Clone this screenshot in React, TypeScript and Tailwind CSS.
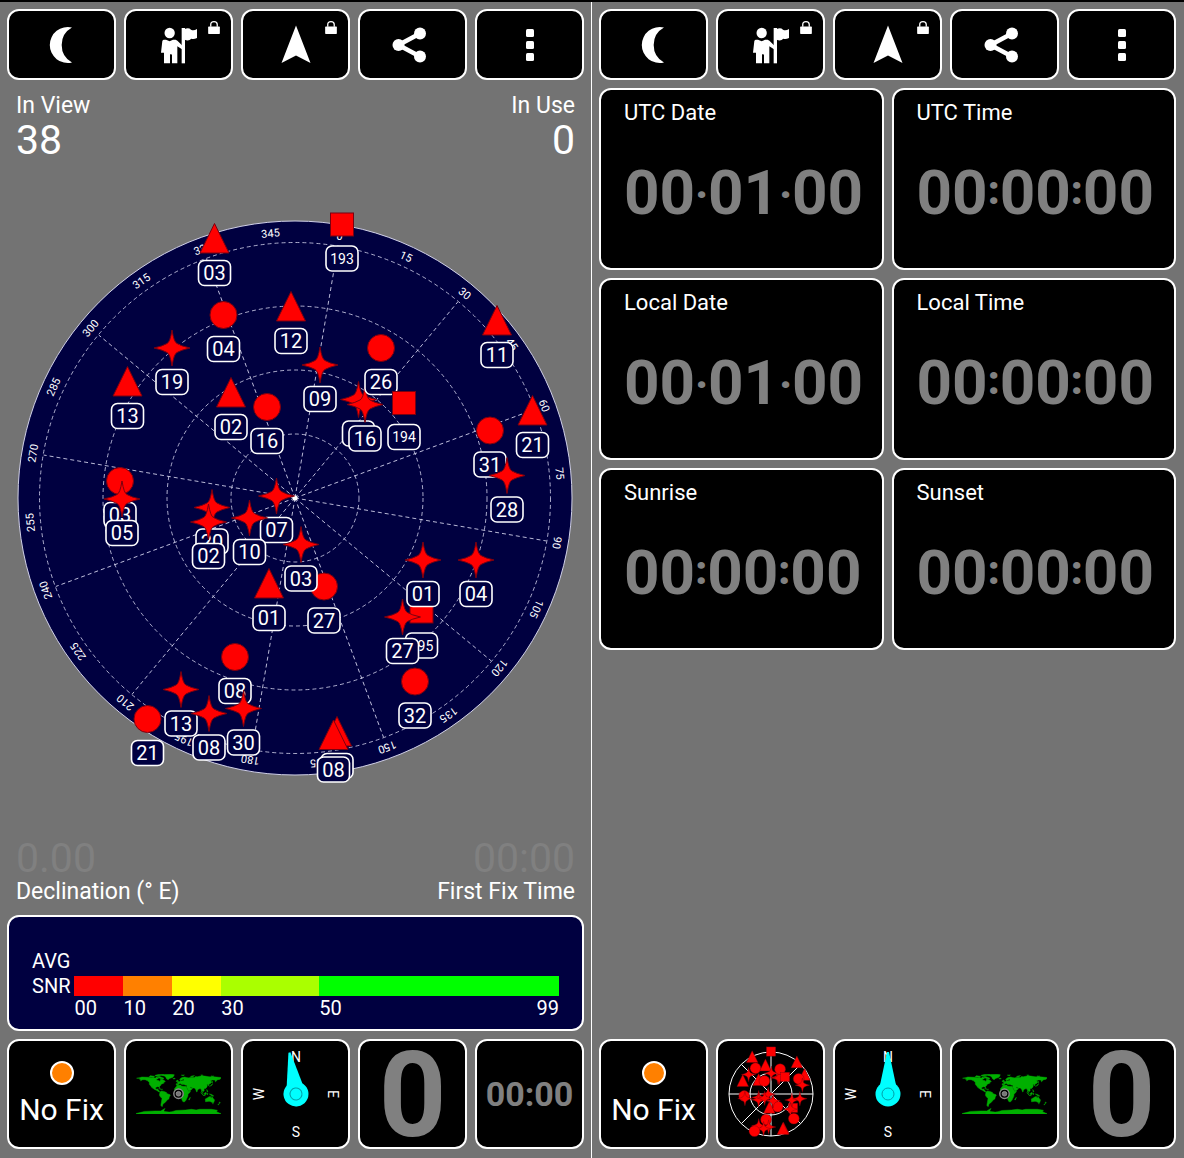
import React from "react";

type Shape = "tri" | "circle" | "star" | "square";
type Sat = { shape: Shape; x: number; y: number; id?: string };

const HEADING = 9.7;

// Satellite places on the sky plot, relative to the zenith.
const sats: Sat[] = [
  { shape: "square", x: 47, y: -273.5, id: "193" },
  { shape: "tri", x: -80.5, y: -259, id: "03" },
  { shape: "circle", x: -71.5, y: -183, id: "04" },
  { shape: "tri", x: -4, y: -191, id: "12" },
  { shape: "star", x: -123, y: -150, id: "19" },
  { shape: "tri", x: -167.5, y: -116, id: "13" },
  { shape: "tri", x: -64, y: -105, id: "02" },
  { shape: "circle", x: -28, y: -91, id: "16" },
  { shape: "star", x: 25, y: -133, id: "09" },
  { shape: "star", x: 63.5, y: -98.5 },
  { shape: "star", x: 70, y: -93.5, id: "16" },
  { shape: "circle", x: 86, y: -150, id: "26" },
  { shape: "square", x: 109, y: -95, id: "194" },
  { shape: "tri", x: 202, y: -177, id: "11" },
  { shape: "tri", x: 237.5, y: -87, id: "21" },
  { shape: "circle", x: 195, y: -67.5, id: "31" },
  { shape: "star", x: 212, y: -22.5, id: "28" },
  { shape: "circle", x: -175, y: -17, id: "03" },
  { shape: "star", x: -173, y: 1, id: "05" },
  { shape: "star", x: -83, y: 9.5, id: "20" },
  { shape: "star", x: -86.5, y: 24, id: "02" },
  { shape: "star", x: -18.5, y: -2, id: "07" },
  { shape: "star", x: -45.5, y: 20, id: "10" },
  { shape: "circle", x: 29, y: 88.5, id: "27" },
  { shape: "star", x: 6, y: 46.5, id: "03" },
  { shape: "tri", x: -26, y: 86, id: "01" },
  { shape: "square", x: 126.5, y: 113.5, id: "195" },
  { shape: "star", x: 128, y: 62, id: "01" },
  { shape: "star", x: 181, y: 62, id: "04" },
  { shape: "star", x: 107.5, y: 119, id: "27" },
  { shape: "circle", x: 120, y: 183.5, id: "32" },
  { shape: "circle", x: -60, y: 159, id: "08" },
  { shape: "star", x: -51.5, y: 210.5, id: "30" },
  { shape: "star", x: -114, y: 191.5, id: "13" },
  { shape: "star", x: -86, y: 215.5, id: "08" },
  { shape: "circle", x: -147.5, y: 221, id: "21" },
  { shape: "tri", x: 42, y: 234 },
  { shape: "tri", x: 38.5, y: 237.5, id: "08" },
];

function Marker({ shape }: { shape: Shape }) {
  const p = { fill: "#ff0000", stroke: "#7a0010", strokeWidth: 1 };
  if (shape === "tri") return <path d="M0-15.5L14.5 14H-14.5Z" {...p} />;
  if (shape === "circle") return <circle r="13.5" {...p} />;
  if (shape === "square") return <rect x="-11.5" y="-11.5" width="23" height="23" {...p} />;
  return <path d="M0-18Q2-5.500 5-4.500Q9-2 18 0Q9 2 5 4.500Q2 5.500 0 18Q-2 5.500-5 4.500Q-9 2-18 0Q-9-2-5-4.500Q-2-5.500 0-18Z" {...p} />;
}

function SkyPlot() {
  const spokes = Array.from({ length: 12 }, (_, i) => i * 30);
  const ticks = Array.from({ length: 24 }, (_, i) => i * 15);
  const dash = { fill: "none", stroke: "#d8d8f0", strokeWidth: 0.8, strokeDasharray: "4 3" };
  return (
    <svg viewBox="-288 -290 577 580" className="block w-full font-[Roboto,sans-serif]" role="img" aria-label="Satellite sky plot">
      <circle r="277" fill="#000040" stroke="#d0d0e8" strokeWidth="1" />
      {[64, 128, 192, 255.5].map((r) => (
        <circle key={r} r={r} {...dash} />
      ))}
      <g transform={`rotate(${HEADING})`}>
        {spokes.map((a) => (
          <path key={a} d="M0 0V-255" transform={`rotate(${a})`} {...dash} />
        ))}
        {ticks.map((a) => (
          <text key={a} y="-262" transform={`rotate(${a})`} textAnchor="middle" fontSize="11" fill="#fff">
            {a}
          </text>
        ))}
      </g>
      <circle r="2.500" fill="#fff" />
      {sats.map((s, i) => (
        <g key={i} transform={`translate(${s.x} ${s.y})`}>
          <rect x="-16" y="21.500" width="32" height="25" rx="6" fill="#000040" stroke="#fff" strokeWidth="1.600" />
          {s.id && (
            <text y={s.id.length > 2 ? 39 : 41} textAnchor="middle" fontSize={s.id.length > 2 ? 14 : 20} fill="#fff">
              {s.id}
            </text>
          )}
          <Marker shape={s.shape} />
        </g>
      ))}
    </svg>
  );
}

function MiniSky() {
  const a = (-HEADING * Math.PI) / 180;
  const line = { fill: "none", stroke: "#fff", strokeWidth: 1 };
  return (
    <svg viewBox="-52 -52 104 104" className="size-[104px]" aria-hidden="true">
      <circle r="42" {...line} />
      <circle r="21" {...line} />
      <path d="M-42 0H42M0-42V42M-29.500-29.500L29.500 29.500M-29.500 29.500L29.500-29.500" {...line} />
      {sats.map((s, i) => {
        const x = (s.x * Math.cos(a) - s.y * Math.sin(a)) * 0.153;
        const y = (s.x * Math.sin(a) + s.y * Math.cos(a)) * 0.153;
        return (
          <g key={i} transform={`translate(${x} ${y}) scale(0.4)`}>
            <Marker shape={s.shape} />
          </g>
        );
      })}
    </svg>
  );
}

function WorldMap() {
  return (
    <svg viewBox="-180 -84 360 170" className="h-10 w-[85px]" aria-hidden="true">
      <g fill="#00b000" stroke="#00b000" strokeWidth="2">
        <path d="M-178-66L-166-68L-156-71L-128-70L-115-68L-108-68L-96-67L-94-72L-86-68L-82-70L-87-64L-94-61L-92-57L-82-55L-79-51L-76-62L-70-62L-64-59L-56-53L-60-49L-65-49L-61-46L-66-44L-70-42L-74-40L-76-35L-81-31L-80-25L-83-29L-90-30L-97-27L-97-20L-91-19L-87-21L-88-16L-83-15L-83-10L-77-8L-83-8L-92-14L-105-20L-113-31L-110-23L-117-32L-124-40L-124-48L-131-55L-142-60L-152-60L-162-55L-158-59L-166-62L-164-66L-178-66Z" />
        <path d="M-125-72L-105-69L-102-74L-120-77ZM-90-73L-80-73L-70-69L-62-66L-66-63L-78-65L-86-70ZM-100-76L-80-77L-62-82L-85-82L-98-79Z" />
        <path d="M-72-78L-60-82L-32-83L-18-81L-20-75L-24-70L-38-65L-44-60L-50-63L-54-70L-60-76ZM-24-65L-15-66L-14-64L-20-63Z" />
        <path d="M-84-22L-76-20L-74-19L-82-22ZM-73-19L-68-19L-70-17Z" />
        <path d="M-78-8L-72-12L-62-10L-51-5L-50-1L-36 4L-35 8L-39 13L-41 22L-48 26L-54 34L-58 38L-62 40L-65 43L-68 48L-68 53L-71 54L-75 49L-73 38L-70 20L-77 13L-81 6L-80-1Z" />
        <path d="M-10-37L-9-43L-1-44L-5-48L3-51L8-54L8-57L11-56L13-54L22-56L23-60L19-64L16-57L11-59L5-60L6-63L15-69L27-71L40-67L34-65L44-68L54-69L68-69L72-73L80-72L100-77L112-75L130-72L150-72L172-70L180-69L180-65L177-62L163-59L162-55L157-51L155-58L145-59L136-55L141-49L135-43L129-41L129-35L126-35L125-39L120-39L122-36L121-29L115-22L108-21L109-13L105-9L101-13L100-8L104-1L98-8L98-16L92-22L86-20L80-15L80-10L77-8L73-18L68-24L60-25L51-29L48-30L52-24L60-22L52-15L44-12L39-20L34-28L36-36L27-37L26-40L24-38L18-42L13-45L18-40L15-38L9-44L3-43L-1-38Z" />
        <path d="M-17-15L-17-21L-10-30L-6-36L10-37L11-33L20-32L32-31L37-20L43-11L51-12L48-5L40 2L40 10L35 20L32 27L26 34L19 34L15 26L12 17L13 8L9 0L9-4L4-6L-8-4L-14-9Z" />
        <path d="M43 25L50 15L49 20L46 26ZM-5-50L1-51L0-53L-3-58L-6-58L-5-54ZM-10-52L-6-52L-6-55L-9-55ZM131-32L140-35L142-41L145-43L141-36L134-33ZM142-46L143-54L144-48Z" />
        <path d="M95-5L105 6L114 8L105 7ZM109-1L117-6L118-1L115 4L110 3ZM120-1L125-1L122 5ZM120-18L125-9L122-7ZM131 1L141 3L150 10L141 8Z" />
        <path d="M114 22L122 18L130 13L136 12L137 16L141 18L142 11L146 18L153 26L150 37L144 38L138 34L130 32L115 34ZM145 41L148 42L146 44ZM173 35L178 38L174 41ZM167 46L173 42L170 47Z" />
        <path d="M-180 86V84L-155 78L-145 75L-100 73L-75 73L-60 64L-57 63L-62 70L-60 75L-40 78L-28 76L-10 71L30 69L55 66L75 69L90 66L140 66L165 70L162 76L174 82L180 84V86Z" />
        <path d="M12-79L25-80L20-77ZM50-71L57-76L68-77L58-71ZM95-80L103-79L98-78ZM138-75L150-75L145-73Z" />
      </g>
      <circle r="20" fill="#000" stroke="#8a8a8a" strokeWidth="6" />
      <circle r="10" fill="#777" stroke="#aaa" strokeWidth="3" />
    </svg>
  );
}

function Compass({ angle }: { angle: number }) {
  return (
    <svg viewBox="-52 -52 104 104" className="size-[104px] font-[Roboto,sans-serif]" aria-hidden="true">
      <g fill="#fff" fontSize="14" textAnchor="middle">
        <text y="-32">N</text>
        <text y="43">S</text>
        <text y="-32" transform="rotate(90)">E</text>
        <text y="-32" transform="rotate(-90)">W</text>
      </g>
      <g transform={`rotate(${angle})`} fill="#00ffff">
        <path d="M-1-42L-8-9H8L1-42Z" />
        <circle r="12.500" />
        <circle r="6" stroke="#00a0a8" strokeWidth="1" />
      </g>
    </svg>
  );
}

function Lock() {
  return (
    <svg viewBox="0 0 36 40" className="absolute right-[11px] top-2.5 h-[13px] w-3" aria-hidden="true">
      <rect y="17" width="36" height="23" rx="2" fill="#fff" />
      <path d="M8 18V11a10 9 0 0 1 20 0V18" fill="none" stroke="#fff" strokeWidth="4" />
    </svg>
  );
}

const icons: { label: string; locked?: boolean; art: React.ReactNode }[] = [
  { label: "Night mode", art: <path d="M30 2.500A18 18 0 1 0 30 37.500A20 20 0 0 1 30 2.500Z" /> },
  {
    label: "Waypoint",
    locked: true,
    art: (
      <g transform="translate(2 2) scale(0.3333)">
        <circle cx="26" cy="18" r="15.500" />
        <path d="M8 38L15 38L26 43L36 38L44 38Q50 40 53 45L63 55V67L49 58V109H33V84Q29 78 27 84V109H9V77H0L4 42Q5 39 8 38Z" />
        <rect x="62" y="3" width="10" height="106" />
        <path d="M71 6Q83 1 90 8Q98 12 108 6V33Q98 38 91 35Q83 44 71 38Z" />
      </g>
    ),
  },
  { label: "Navigate", locked: true, art: <path d="M20 .5L34.500 38L20 30.500L5.500 38Z" /> },
  {
    label: "Share",
    art: (
      <g>
        <path d="M27 8.500L5.500 20L27 31.500" fill="none" stroke="#fff" strokeWidth="4.500" />
        <circle cx="5.500" cy="20" r="6" />
        <circle cx="27" cy="8.500" r="6" />
        <circle cx="27" cy="31.500" r="6" />
      </g>
    ),
  },
  {
    label: "More",
    art: (
      <g>
        <rect x="16" y="4" width="8" height="8" rx="1.500" />
        <rect x="16" y="16" width="8" height="8" rx="1.500" />
        <rect x="16" y="28" width="8" height="8" rx="1.500" />
      </g>
    ),
  },
];

function Toolbar() {
  return (
    <nav className="grid grid-cols-5 gap-2">
      {icons.map((i) => (
        <button key={i.label} aria-label={i.label} className="relative flex h-[71px] items-center justify-center rounded-xl border-2 border-white bg-black">
          <svg viewBox="0 0 40 40" className="size-10 overflow-visible" fill="#fff" aria-hidden="true">
            {i.art}
          </svg>
          {i.locked && <Lock />}
        </button>
      ))}
    </nav>
  );
}

function Tile({ label, children }: { label: string; children: React.ReactNode }) {
  return (
    <button aria-label={label} className="flex h-[110px] min-w-0 flex-col items-center justify-center rounded-xl border-2 border-white bg-black">
      {children}
    </button>
  );
}

function NoFix() {
  return (
    <Tile label="No Fix">
      <span className="size-6 rounded-full border-2 border-white bg-[#ff8000]" />
      <span className="mt-2 whitespace-nowrap text-[30px] leading-[34px]">No Fix</span>
    </Tile>
  );
}

function Zero() {
  return (
    <Tile label="Speed 0">
      <span className="pt-1 text-[118px] font-bold leading-[100px] text-[#808080]">0</span>
    </Tile>
  );
}

const bands = [
  { from: "00", size: 10, bar: "bg-[#ff0000]" },
  { from: "10", size: 10, bar: "bg-[#ff8000]" },
  { from: "20", size: 10, bar: "bg-[#ffff00]" },
  { from: "30", size: 20, bar: "bg-[#aaff00]" },
  { from: "50", size: 49, bar: "bg-[#00ff00]" },
];

function Snr() {
  return (
    <section className="flex h-[116px] items-end gap-1 rounded-xl border-2 border-white bg-[#000040] pb-2 pl-[23px] pr-[23px] text-xl leading-[25px]">
      <div className="pb-[22px]">
        <div>AVG</div>
        <div>SNR</div>
      </div>
      <div className="flex flex-1">
        {bands.map((b) => (
          <div key={b.from} className="min-w-0" style={{ flex: `${b.size} 1 0` }}>
            <div className={`h-5 ${b.bar}`} />
            <div className="flex justify-between">
              <span>{b.from}</span>
              {b.from === "50" && <span>99</span>}
            </div>
          </div>
        ))}
      </div>
    </section>
  );
}

const cards = [
  ["UTC Date", "00·01·00"],
  ["UTC Time", "00:00:00"],
  ["Local Date", "00·01·00"],
  ["Local Time", "00:00:00"],
  ["Sunrise", "00:00:00"],
  ["Sunset", "00:00:00"],
];

function Readout({ value }: { value: string }) {
  return (
    <div className="mt-8 flex h-16 items-center whitespace-nowrap text-[62px] font-bold leading-[64px] text-[#808080]">
      {value.split(/([·:])/).map((part, i) =>
        i % 2 ? (
          <span key={i} className={part === ":" ? "pb-1 text-[40px] font-black leading-10" : "pt-1 text-[40px] font-black leading-10"}>
            {part}
          </span>
        ) : (
          <span key={i}>{part}</span>
        ),
      )}
    </div>
  );
}

const panel = "flex min-w-0 flex-1 flex-col px-[7px] pb-[9px] pt-[7px]";

export default function App() {
  return (
    <main className="flex min-h-screen border-t-2 border-black bg-[#737373] pr-px font-[Roboto,sans-serif] text-white">
      <div className={`${panel} border-r border-white`}>
        <Toolbar />
        <div className="flex justify-between px-[9px] pt-2.5">
          <div>
            <div className="text-[23px] leading-8">In View</div>
            <div className="text-[41px] leading-9">38</div>
          </div>
          <div className="text-right">
            <div className="text-[23px] leading-8">In Use</div>
            <div className="text-[41px] leading-9">0</div>
          </div>
        </div>
        <div className="flex flex-1 flex-col justify-center pb-0.5">
          <SkyPlot />
        </div>
        <div className="flex justify-between px-[9px] pb-[7px]">
          <div>
            <div className="text-[41px] leading-9 text-[#808080]">0.00</div>
            <div className="text-[23px] leading-8">Declination (° E)</div>
          </div>
          <div className="text-right">
            <div className="text-[41px] leading-9 text-[#808080]">00:00</div>
            <div className="text-[23px] leading-8">First Fix Time</div>
          </div>
        </div>
        <Snr />
        <div className="mt-2 grid grid-cols-5 gap-2">
          <NoFix />
          <Tile label="World map"><WorldMap /></Tile>
          <Tile label="Compass"><Compass angle={-9} /></Tile>
          <Zero />
          <Tile label="Time">
            <span className="text-[34px] font-bold leading-none text-[#808080]">00:00</span>
          </Tile>
        </div>
      </div>
      <div className={panel}>
        <Toolbar />
        <div className="mt-2 grid grid-cols-2 gap-2">
          {cards.map(([t, v]) => (
            <section key={t} className="h-[182px] min-w-0 rounded-xl border-2 border-white bg-black px-[23px] pt-[7px]">
              <h2 className="text-[22px] leading-8">{t}</h2>
              <Readout value={v} />
            </section>
          ))}
        </div>
        <div className="mt-auto grid grid-cols-5 gap-2">
          <NoFix />
          <Tile label="Satellites"><MiniSky /></Tile>
          <Tile label="Compass"><Compass angle={0} /></Tile>
          <Tile label="World map"><WorldMap /></Tile>
          <Zero />
        </div>
      </div>
    </main>
  );
}
